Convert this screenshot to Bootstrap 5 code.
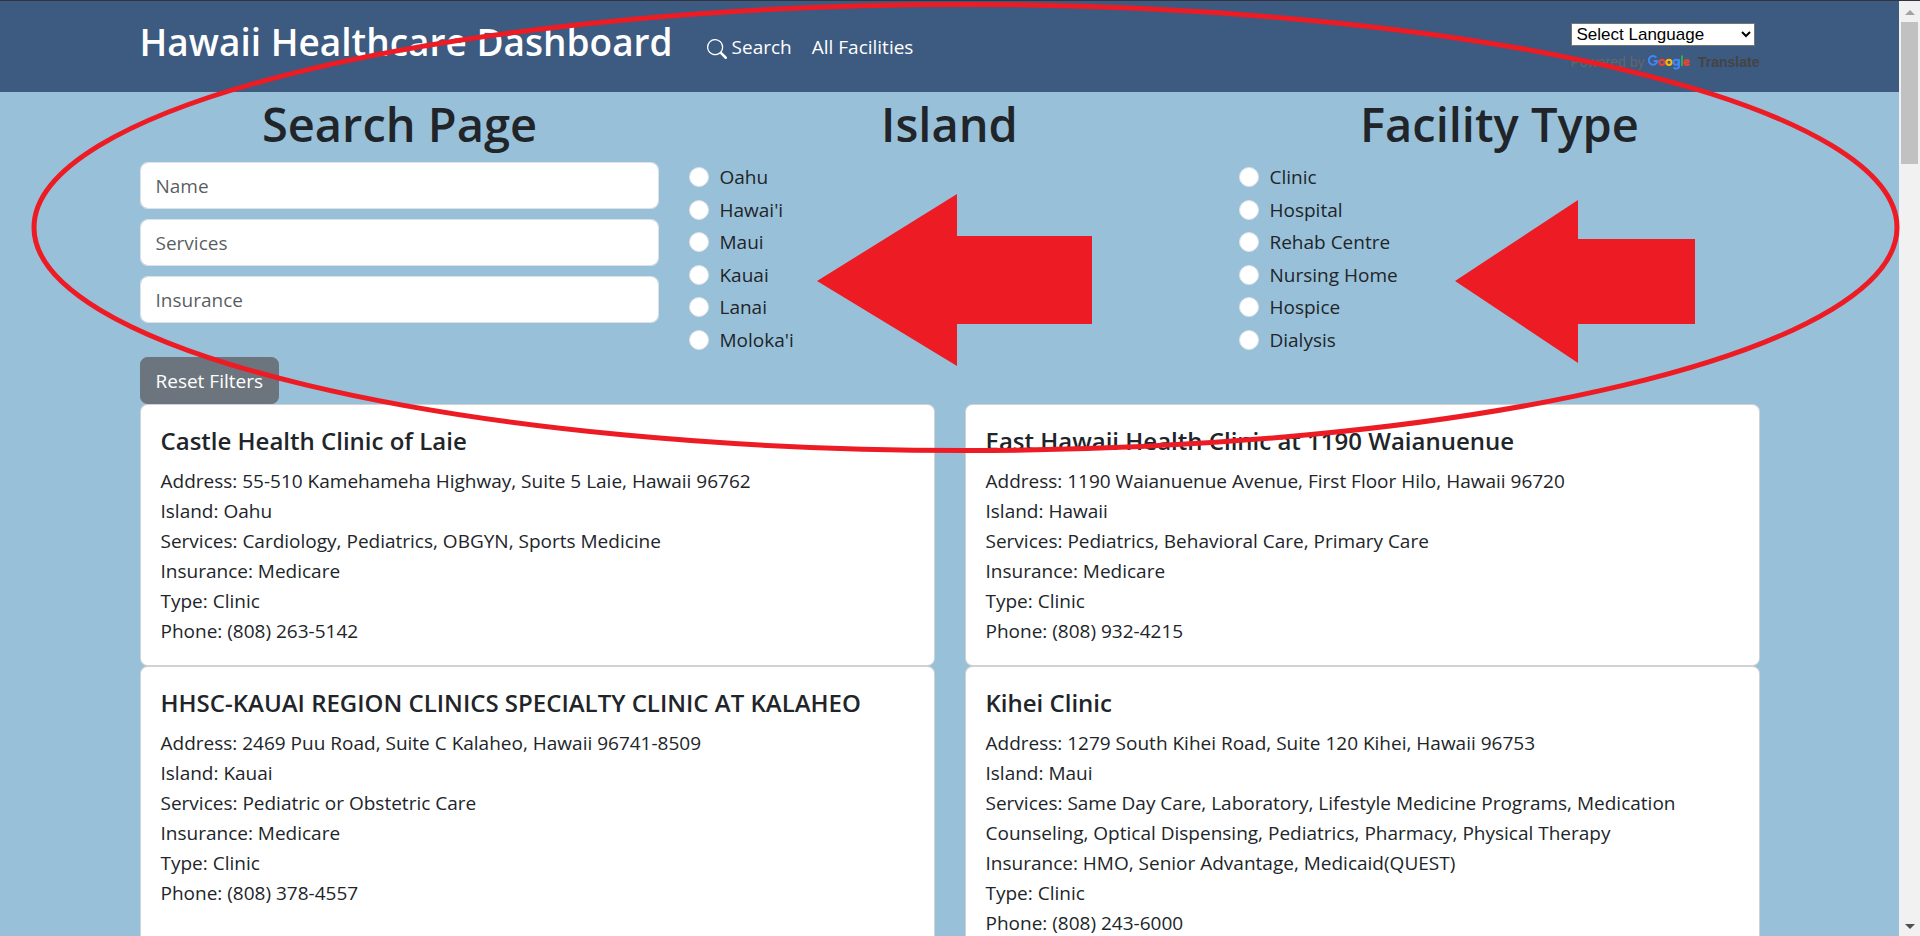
<!DOCTYPE html>
<html lang="en">
<head>
<meta charset="utf-8">
<meta name="viewport" content="width=device-width, initial-scale=1">
<title>Hawaii Healthcare Dashboard</title>
<link href="https://cdn.jsdelivr.net/npm/bootstrap@5.3.0/dist/css/bootstrap.min.css" rel="stylesheet">
<style>
  html { font-size: 20px; }
  body {
    font-family: "Open Sans", "Noto Sans", sans-serif;
    font-size: 19px;
    line-height: 30px;
    background: #98c1d9;
    border-top: 1px solid #33343f;
  }
  .container { max-width: 1650px; }
  .page-title { font-size: 47px; font-weight: 600; line-height: 64px; margin-bottom: 6px; }
  .site-header { background: #3d5a80; min-height: 91px; padding: 13px 0 20px; }
  .site-header .navbar-brand { font-size: 37px; font-weight: 600; line-height: 56px; margin-right: 24px; padding: 0; }
  .site-header .nav-link { font-size: 19px; line-height: 30px; padding: 8px 10px 0; }
  .form-control, .btn { font-size: 19px; line-height: 30px; }
  .form-check { font-size: 20px; }
  .form-check-label { font-size: 19px; }
  .card-body { padding: 21px 20px 19px; }
  .card-title { font-size: 24px; font-weight: 600; line-height: 30px; margin-bottom: 10px; }
  .translate-box { width: 189px; font-family: "Liberation Sans", sans-serif; padding-top: 9px; }
  .translate-box select {
    display: block; width: 184px; height: 23px; padding: 0 1px; font-size: 17px; line-height: 20px;
    font-family: inherit; color: #000; background: #fff; border: 1px solid #767676; border-radius: 0;
  }
  .powered { font-size: 14px; line-height: 20px; color: #666; margin-top: 6px; white-space: nowrap; }
  .powered a { color: #444; font-weight: 700; text-decoration: none; }
  .scroll-rail { width: 21px; background: #f1f1f1; padding: 9px 2px 7px; }
  .scroll-thumb { width: 17px; height: 142px; background: #c1c1c1; margin-top: 7px; }
  .marks { position: absolute; top: 0; left: 0; width: 100%; pointer-events: none; z-index: 10; }
</style>
</head>
<body class="vh-100 overflow-hidden d-flex position-relative">
<div class="flex-grow-1 overflow-hidden">
  <header class="site-header">
    <div class="container d-flex align-items-start">
      <a class="navbar-brand text-white" href="#">Hawaii Healthcare Dashboard</a>
      <nav class="nav flex-grow-1 pt-2">
        <a class="nav-link text-white" href="#"><svg width="20" height="20" viewBox="0 0 16 16" fill="currentColor" aria-hidden="true"><path d="M11.742 10.344a6.5 6.5 0 1 0-1.397 1.398h-.001c.03.04.062.078.098.115l3.85 3.85a1 1 0 0 0 1.415-1.414l-3.85-3.85a1.007 1.007 0 0 0-.115-.1zM12 6.5a5.5 5.5 0 1 1-11 0 5.5 5.5 0 0 1 11 0z"/></svg> Search</a>
        <a class="nav-link text-white" href="#">All Facilities</a>
      </nav>
      <div class="translate-box">
        <select aria-label="Language"><option>Select Language</option></select>
        <div class="powered d-flex align-items-center">Powered by&nbsp;<svg width="42" height="16" viewBox="0 0 42 16" fill="none" stroke-width="2" role="img" aria-label="Google"><path stroke="#4285f4" d="M8.300 3.600A4.300 4.300 0 1 0 9.300 7H5.500"/><circle cx="14" cy="8.300" r="2.600" stroke="#ea4335"/><circle cx="21" cy="8.300" r="2.600" stroke="#fbbc05"/><circle cx="28" cy="8.300" r="2.500" stroke="#4285f4"/><path stroke="#4285f4" d="M31 5v7c0 3-4 3.500-5.200 1.200"/><path stroke="#34a853" d="M34 1.500V12"/><path stroke="#ea4335" d="M36.800 9.500l4.300-1.900c-1-2.500-4.600-2-4.600.8s3.500 3.500 4.800 1.400"/></svg><a class="ms-auto" href="#">Translate</a></div>
      </div>
    </div>
  </header>

  <main class="container">
    <div class="row">
      <div class="col-4">
        <h1 class="page-title text-center">Search Page</h1>
        <div class="d-grid gap-2">
          <input class="form-control" type="text" placeholder="Name" aria-label="Name">
          <input class="form-control" type="text" placeholder="Services" aria-label="Services">
          <input class="form-control" type="text" placeholder="Insurance" aria-label="Insurance">
        </div>
      </div>
      <div class="col-4" role="radiogroup" aria-label="Island">
        <h1 class="page-title text-center">Island</h1>
        <div class="form-check"><input class="form-check-input" type="radio" name="island" id="i1"><label class="form-check-label" for="i1">Oahu</label></div>
        <div class="form-check"><input class="form-check-input" type="radio" name="island" id="i2"><label class="form-check-label" for="i2">Hawai'i</label></div>
        <div class="form-check"><input class="form-check-input" type="radio" name="island" id="i3"><label class="form-check-label" for="i3">Maui</label></div>
        <div class="form-check"><input class="form-check-input" type="radio" name="island" id="i4"><label class="form-check-label" for="i4">Kauai</label></div>
        <div class="form-check"><input class="form-check-input" type="radio" name="island" id="i5"><label class="form-check-label" for="i5">Lanai</label></div>
        <div class="form-check"><input class="form-check-input" type="radio" name="island" id="i6"><label class="form-check-label" for="i6">Moloka'i</label></div>
      </div>
      <div class="col-4" role="radiogroup" aria-label="Facility Type">
        <h1 class="page-title text-center">Facility Type</h1>
        <div class="form-check"><input class="form-check-input" type="radio" name="type" id="t1"><label class="form-check-label" for="t1">Clinic</label></div>
        <div class="form-check"><input class="form-check-input" type="radio" name="type" id="t2"><label class="form-check-label" for="t2">Hospital</label></div>
        <div class="form-check"><input class="form-check-input" type="radio" name="type" id="t3"><label class="form-check-label" for="t3">Rehab Centre</label></div>
        <div class="form-check"><input class="form-check-input" type="radio" name="type" id="t4"><label class="form-check-label" for="t4">Nursing Home</label></div>
        <div class="form-check"><input class="form-check-input" type="radio" name="type" id="t5"><label class="form-check-label" for="t5">Hospice</label></div>
        <div class="form-check"><input class="form-check-input" type="radio" name="type" id="t6"><label class="form-check-label" for="t6">Dialysis</label></div>
      </div>
    </div>
    <button class="btn btn-secondary d-block" type="button">Reset Filters</button>

    <div class="row row-cols-2">
      <div class="col"><div class="card h-100"><div class="card-body">
        <h5 class="card-title">Castle Health Clinic of Laie</h5>
        <div>Address: 55-510 Kamehameha Highway, Suite 5 Laie, Hawaii 96762</div>
        <div>Island: Oahu</div>
        <div>Services: Cardiology, Pediatrics, OBGYN, Sports Medicine</div>
        <div>Insurance: Medicare</div>
        <div>Type: Clinic</div>
        <div>Phone: (808) 263-5142</div>
      </div></div></div>
      <div class="col"><div class="card h-100"><div class="card-body">
        <h5 class="card-title">East Hawaii Health Clinic at 1190 Waianuenue</h5>
        <div>Address: 1190 Waianuenue Avenue, First Floor Hilo, Hawaii 96720</div>
        <div>Island: Hawaii</div>
        <div>Services: Pediatrics, Behavioral Care, Primary Care</div>
        <div>Insurance: Medicare</div>
        <div>Type: Clinic</div>
        <div>Phone: (808) 932-4215</div>
      </div></div></div>
      <div class="col"><div class="card h-100"><div class="card-body">
        <h5 class="card-title">HHSC-KAUAI REGION CLINICS SPECIALTY CLINIC AT KALAHEO</h5>
        <div>Address: 2469 Puu Road, Suite C Kalaheo, Hawaii 96741-8509</div>
        <div>Island: Kauai</div>
        <div>Services: Pediatric or Obstetric Care</div>
        <div>Insurance: Medicare</div>
        <div>Type: Clinic</div>
        <div>Phone: (808) 378-4557</div>
      </div></div></div>
      <div class="col"><div class="card h-100"><div class="card-body">
        <h5 class="card-title">Kihei Clinic</h5>
        <div>Address: 1279 South Kihei Road, Suite 120 Kihei, Hawaii 96753</div>
        <div>Island: Maui</div>
        <div>Services: Same Day Care, Laboratory, Lifestyle Medicine Programs, Medication Counseling, Optical Dispensing, Pediatrics, Pharmacy, Physical Therapy</div>
        <div>Insurance: HMO, Senior Advantage, Medicaid(QUEST)</div>
        <div>Type: Clinic</div>
        <div>Phone: (808) 243-6000</div>
      </div></div></div>
    </div>
  </main>
</div>

<div class="scroll-rail flex-shrink-0 d-flex flex-column align-items-center" aria-hidden="true">
  <svg width="10" height="5" viewBox="0 0 10 5"><path d="M5 0l5 5H0z" fill="#a3a3a3"/></svg>
  <div class="scroll-thumb"></div>
  <svg class="mt-auto" width="10" height="5" viewBox="0 0 10 5"><path d="M0 0h10L5 5z" fill="#505050"/></svg>
</div>

<!-- highlight around the filters, with an arrow at each radio list -->
<svg class="marks" viewBox="0 1 1920 460" fill="#ed1c24" aria-hidden="true">
  <ellipse cx="965.500" cy="227.500" rx="931.500" ry="223" fill="none" stroke="#ed1c24" stroke-width="5"/>
  <path d="M817 281L957 194V236H1092V324H957V366Z"/>
  <path d="M1455 281L1578 200V239H1695V324H1578V363Z"/>
</svg>
<script src="https://cdn.jsdelivr.net/npm/bootstrap@5.3.0/dist/js/bootstrap.bundle.min.js"></script>
</body>
</html>
